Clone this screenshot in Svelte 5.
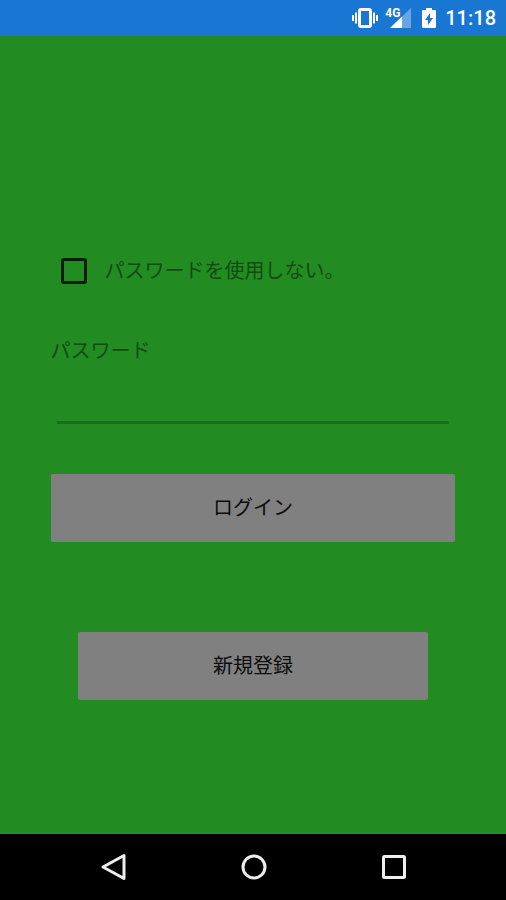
<script lang="ts">
  let withoutPassword = $state(false);
  let password = $state('');

  function handleSubmit(event: SubmitEvent) {
    event.preventDefault();
  }
</script>

<div class="screen">
  <header class="status-bar">
    <svg class="vibrate" viewBox="0 0 26 20" aria-hidden="true">
      <rect x="7.5" y="1.5" width="11" height="17" rx="1.5" fill="none" stroke="#fff" stroke-width="3" />
      <path d="M1 7v6M4 4.5v11M22 4.5v11M25 7v6" stroke="#fff" stroke-width="2" />
    </svg>
    <div class="signal">
      <span class="network">4G</span>
      <svg viewBox="0 0 21 20" aria-hidden="true">
        <path d="M21 0v20H0z" fill="#fff" opacity="0.35" />
        <path d="M12 8.6V20H0z" fill="#fff" />
      </svg>
    </div>
    <svg class="battery" viewBox="0 0 14 20" aria-hidden="true">
      <path d="M4 0h6v2h3a1 1 0 0 1 1 1v16a1 1 0 0 1-1 1H1a1 1 0 0 1-1-1V3a1 1 0 0 1 1-1h3z" fill="#fff" />
      <path d="M8 5L3 12h3v5l5-7H8z" fill="#1976d2" />
    </svg>
    <span class="clock">11:18</span>
  </header>

  <main>
    <form onsubmit={handleSubmit}>
      <label class="check">
        <input type="checkbox" bind:checked={withoutPassword} />
        <span>パスワードを使用しない。</span>
      </label>

      <label class="caption" for="password">パスワード</label>
      <input class="field" id="password" type="password" bind:value={password} disabled={withoutPassword} />

      <button class="login" type="submit">ログイン</button>
      <button class="register" type="button">新規登録</button>
    </form>
  </main>

  <nav>
    <button type="button" aria-label="戻る">
      <svg viewBox="0 0 28 28"><path d="M24 2.5v23L3 14z" /></svg>
    </button>
    <button type="button" aria-label="ホーム">
      <svg viewBox="0 0 28 28"><circle cx="14" cy="14" r="11" /></svg>
    </button>
    <button type="button" aria-label="アプリ履歴">
      <svg viewBox="0 0 28 28"><rect x="3.5" y="3.5" width="21" height="21" rx="1" /></svg>
    </button>
  </nav>
</div>

<style>
  :global(body) {
    margin: 0;
  }

  .screen {
    display: flex;
    flex-direction: column;
    min-height: 100vh;
    background: #228b22;
    font-family: Roboto, 'Noto Sans CJK JP', sans-serif;
    font-size: 20px;
    line-height: 30px;
  }

  .status-bar {
    display: flex;
    align-items: center;
    justify-content: flex-end;
    height: 36px;
    padding-right: 10px;
    background: #1976d2;
    color: #fff;
  }

  .vibrate {
    width: 26px;
    height: 20px;
  }

  .signal {
    position: relative;
    display: flex;
    margin-left: 12px;
  }

  .signal svg {
    width: 21px;
    height: 20px;
  }

  .network {
    position: absolute;
    top: -1px;
    left: -5px;
    font-size: 12px;
    font-weight: 700;
    line-height: 12px;
  }

  .battery {
    width: 14px;
    height: 20px;
    margin: 0 9px 0 11px;
  }

  .clock {
    font-weight: 500;
  }

  main {
    flex: 1;
    padding: 215px 10% 40px;
  }

  form {
    display: flex;
    flex-direction: column;
  }

  .check {
    display: flex;
    align-items: center;
    align-self: flex-start;
    gap: 18px;
    height: 40px;
    padding-left: 10px;
    color: #124c12;
  }

  .check input {
    appearance: none;
    width: 26px;
    height: 26px;
    margin: 0;
    border: 3px solid #071c07;
    border-radius: 3px;
  }

  .check input:checked {
    background: #071c07;
  }

  .caption {
    margin-top: 45px;
    color: #124c12;
  }

  .field {
    height: 55px;
    margin: 0 6px;
    padding: 0;
    border: none;
    border-bottom: 3px solid #1a701a;
    background: transparent;
    color: #071c07;
    font: inherit;
    outline: none;
  }

  .login,
  .register {
    height: 68px;
    border: none;
    border-radius: 2px;
    background: #808080;
    color: #0c0c0c;
    font: inherit;
    cursor: pointer;
  }

  .login {
    margin-top: 50px;
  }

  .register {
    margin: 90px 27px 0;
  }

  nav {
    display: flex;
    align-items: center;
    justify-content: center;
    gap: 84px;
    height: 66px;
    padding-left: 2px;
    background: #000;
  }

  nav button {
    display: flex;
    justify-content: center;
    width: 56px;
    padding: 0;
    border: none;
    background: transparent;
    cursor: pointer;
  }

  nav svg {
    width: 28px;
    height: 28px;
    fill: none;
    stroke: #eee;
    stroke-width: 3;
    stroke-linejoin: round;
  }
</style>
